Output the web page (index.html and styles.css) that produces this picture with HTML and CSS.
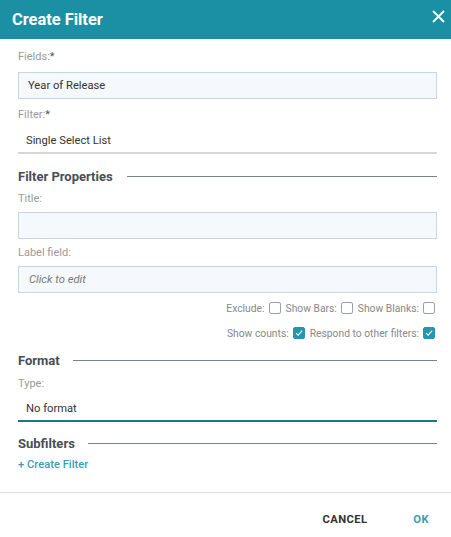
FILE: index.html
```html
<!DOCTYPE html>
<html>
<head>
<meta charset="utf-8">
<link rel="stylesheet" href="styles.css">
</head>
<body>
<div class="dialog">
  <header class="dlg-head">
    <h1>Create Filter</h1>
    <svg class="close" width="13" height="13" viewBox="0 0 13 13"><path d="M1 1L12 12M12 1L1 12" stroke="#fff" stroke-width="1.8" fill="none"/></svg>
  </header>
  <div class="dlg-body">
    <div class="lbl">Fields:<b>*</b></div>
    <div class="box">Year of Release</div>
    <div class="lbl lbl2">Filter:<b>*</b></div>
    <div class="select">Single Select List</div>

    <div class="section sec1"><span>Filter Properties</span><i></i></div>
    <div class="lbl lbl4">Title:</div>
    <div class="box"></div>
    <div class="lbl lbl3">Label field:</div>
    <div class="box ph">Click to edit</div>

    <div class="checks">
      <label>Exclude: <span class="cb"></span></label>
      <label>Show Bars: <span class="cb"></span></label>
      <label>Show Blanks: <span class="cb"></span></label>
    </div>
    <div class="checks checks2">
      <label>Show counts: <span class="cb on"><svg width="12" height="12" viewBox="0 0 12 12"><path d="M2.5 6.2L5 8.6L9.8 3.2" stroke="#fff" stroke-width="1.3" fill="none"/></svg></span></label>
      <label>Respond to other filters: <span class="cb on"><svg width="12" height="12" viewBox="0 0 12 12"><path d="M2.5 6.2L5 8.6L9.8 3.2" stroke="#fff" stroke-width="1.3" fill="none"/></svg></span></label>
    </div>

    <div class="section sec2"><span>Format</span><i></i></div>
    <div class="lbl lbl5">Type:</div>
    <div class="select active">No format</div>

    <div class="section sec3"><span>Subfilters</span><i></i></div>
    <a class="add">+ Create Filter</a>
  </div>
  <footer class="dlg-foot">
    <button class="btn">CANCEL</button>
    <button class="btn ok">OK</button>
  </footer>
</div>
</body>
</html>
```
FILE: styles.css
```css
* { box-sizing: border-box; }
html, body { margin: 0; padding: 0; background: #fff; }
body { font-family: Roboto, "Liberation Sans", sans-serif; width: 451px; height: 537px; overflow: hidden; }
.dialog { width: 451px; }
.dlg-head {
  height: 39px; background: #1b8fa3;
  display: flex; align-items: center; justify-content: space-between;
  padding: 0 6px 0 12px;
}
.dlg-head h1 { margin: 0; color: #fff; font-size: 16.4px; font-weight: 700; }
.close { display: block; margin-top: -6px; }
.dlg-body { padding: 11px 14px 0 18px; }
.lbl { font-size: 11px; color: #9a9a9a; line-height: 13px; height: 13px; margin-bottom: 9px; }
.lbl b { color: #555; font-weight: 400; }
.lbl2 { margin-top: 9px; margin-bottom: 0; }
.lbl4 { margin-top: 8px; margin-bottom: 7px; }
.lbl3 { margin-top: 7px; margin-bottom: 7px; }
.lbl5 { margin-top: 9px; margin-bottom: 0; }
.box {
  height: 27px; background: #f5f9fd; border: 1px solid #c8d5e0;
  font-size: 11.2px; color: #333; line-height: 25px; padding-left: 9px;
}
.box.ph { font-style: italic; color: #777; padding-left: 10px; }
.select {
  height: 33px; border-bottom: 2px solid #d6d6d6;
  font-size: 11.2px; color: #333; line-height: 16px; padding: 12px 0 0 8px;
}
.select.active { border-bottom-color: #14798c; height: 32px; padding-top: 11px; }
.section { display: flex; align-items: center; font-size: 13px; font-weight: 700; color: #474e57; height: 16px; }
.section i { flex: 1; height: 1px; background: #7b828c; margin-left: 13px; }
.sec1 { margin-top: 14px; }
.sec1 i { margin-left: 14px; }
.sec2 { margin-top: 12px; }
.sec3 { margin-top: 13px; }
.checks { display: flex; justify-content: flex-end; gap: 5px; margin-top: 8px; margin-right: 2px; font-size: 10.3px; color: #888; height: 14px; }
.checks2 { margin-top: 11px; }
.checks label { display: flex; align-items: center; gap: 4px; }
.cb { width: 12px; height: 12px; border: 1px solid #9aa3ad; border-radius: 2px; display: inline-flex; align-items: center; justify-content: center; background: #fff; }
.cb.on { background: #2596ad; border-color: #2596ad; }
.cb svg { display: block; }
.add { display: block; margin-top: 7px; font-size: 11.2px; color: #3a9db5; font-weight: 500; line-height: 14px; }
.dlg-foot {
  margin-top: 20px; border-top: 1px solid #e0e0e0; height: 54px;
  display: flex; justify-content: flex-end; align-items: center; padding-right: 22px; gap: 46px;
}
.btn { border: 0; background: none; padding: 0; font-family: inherit; font-size: 11.2px; font-weight: 700; color: #333; letter-spacing: 0.4px; }
.btn.ok { color: #3a9db5; }
```
